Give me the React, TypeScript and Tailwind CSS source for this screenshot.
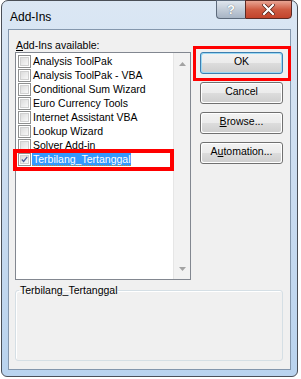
import React from 'react';

const items = [
  'Analysis ToolPak',
  'Analysis ToolPak - VBA',
  'Conditional Sum Wizard',
  'Euro Currency Tools',
  'Internet Assistant VBA',
  'Lookup Wizard',
  'Solver Add-in',
  'Terbilang_Tertanggal',
];

function CheckBox({ checked }: { checked: boolean }) {
  return (
    <div className="w-[13px] h-[13px] shrink-0 border border-[#8e8f8f] bg-white p-[1px]">
      <div className="w-full h-full border border-[#d0d0d0] bg-gradient-to-br from-[#dcdcdc] to-[#f8f8f8] flex items-center justify-center">
        {checked ? (
          <svg width="9" height="9" viewBox="0 0 9 9">
            <path d="M1 4.5 L3.4 7 L8 1.2" fill="none" stroke="#4a5f97" strokeWidth="1.6" />
          </svg>
        ) : null}
      </div>
    </div>
  );
}

function Button({ label, u, isDefault }: { label: string; u?: number; isDefault?: boolean }) {
  return (
    <div
      className={
        'w-[83px] h-[22px] rounded-[3px] border p-[1px] ' +
        (isDefault ? 'border-[#3c7fb1] bg-[#9bd8f3]' : 'border-[#707070] bg-white')
      }
    >
      <div className="w-full h-full rounded-[2px] flex flex-col overflow-hidden">
        <div className="flex-1 bg-gradient-to-b from-[#f2f2f2] to-[#ebebeb]" />
        <div className="flex-1 bg-gradient-to-b from-[#dddddd] to-[#cfcfcf]" />
      </div>
      <div className="-mt-[20px] h-[20px] flex items-center justify-center text-black relative">
        {u === undefined ? (
          label
        ) : (
          <span>
            {label.slice(0, u)}
            <span className="underline">{label[u]}</span>
            {label.slice(u + 1)}
          </span>
        )}
      </div>
    </div>
  );
}

export default function App() {
  return (
    <div className="w-[301px] h-[379px] bg-white pl-[1px] pr-[3px] pb-[2px] font-['Liberation_Sans',Arial,sans-serif] text-[10.5px] text-black overflow-hidden">
      <div className="w-full h-full rounded-t-[7px] rounded-b-[6px] border border-[#4a4f57] bg-gradient-to-b from-[#dbe7f4] via-[#cadcf0] to-[#b9d3ee] flex flex-col px-[6px] pb-[6px] relative">
        {/* caption */}
        <div className="h-[28px] flex items-start justify-between">
          <div className="pt-[9px] pl-[2px] text-[12px] leading-[14px] text-black">Add-Ins</div>
          <div className="flex -mt-[1px] mr-[-1px]">
            <div className="w-[29px] h-[19px] rounded-bl-[4px] border border-[#5d6a7b] border-r-0 bg-gradient-to-b from-[#dfe6ee] via-[#c2ccd8] to-[#a7b4c4] flex items-center justify-center text-[13px] font-bold text-white [text-shadow:0_0_1px_#3b4a5c]">
              ?
            </div>
            <div className="w-[47px] h-[19px] rounded-br-[4px] border border-[#5b2a24] bg-gradient-to-b from-[#e8a493] via-[#cf5b42] to-[#c2442c] flex items-center justify-center">
              <svg width="13" height="11" viewBox="0 0 13 11">
                <path d="M2 1 L11 10 M11 1 L2 10" stroke="#4b1a12" strokeWidth="3.6" strokeLinecap="square" />
                <path d="M2 1 L11 10 M11 1 L2 10" stroke="#ffffff" strokeWidth="2.2" strokeLinecap="square" />
              </svg>
            </div>
          </div>
        </div>

        {/* client area */}
        <div className="flex-1 border border-[#8497ad] bg-[#f0f0f0] pl-[6px] pr-[7px] pt-[8px] pb-[8px] flex flex-col">
          <div className="h-[14px] leading-[14px] pl-[1px]">
            <span className="underline">A</span>dd-Ins available:
          </div>
          <div className="flex mt-0">
            {/* list box */}
            <div className="w-[176px] h-[228px] border border-[#828790] bg-white flex">
              <div className="flex-1 pt-[1px] pl-[1px]">
                {items.map((it, i) => {
                  const sel = i === items.length - 1;
                  return (
                    <div key={it} className="h-[14px] flex items-center pl-[1px] relative">
                      <CheckBox checked={sel} />
                      <span
                        className={
                          'ml-[1px] px-[1px] h-[14px] leading-[14px] whitespace-nowrap ' +
                          (sel ? 'bg-[#3399ff] text-white border-b border-dotted border-[#c58b3d] leading-[13px]' : '')
                        }
                      >
                        {it}
                      </span>
                      {sel ? (
                        <div className="absolute left-[-4px] right-[-1px] top-[-3px] bottom-[-5px] border-[4px] border-[#ff0000]" />
                      ) : null}
                    </div>
                  );
                })}
              </div>
              {/* scrollbar */}
              <div className="w-[17px] bg-[#f2f2f2] border-l border-[#e6e6e6] flex flex-col justify-between items-center pt-[9px] pb-[8px]">
                <svg width="7" height="4" viewBox="0 0 7 4">
                  <path d="M0 4 L3.5 0 L7 4 Z" fill="#a3a3a3" />
                </svg>
                <svg width="7" height="4" viewBox="0 0 7 4">
                  <path d="M0 0 L3.5 4 L7 0 Z" fill="#a3a3a3" />
                </svg>
              </div>
            </div>
            {/* buttons */}
            <div className="ml-[9px] flex flex-col gap-[8px]">
              <div className="relative">
                <Button label="OK" isDefault />
                <div className="absolute left-[-7px] right-[-8px] top-[-6px] bottom-[-7px] border-[3px] border-[#ff0000]" />
              </div>
              <Button label="Cancel" />
              <Button label="Browse..." u={0} />
              <Button label="Automation..." u={1} />
            </div>
          </div>
          {/* description group */}
          <fieldset className="mt-[4px] flex-1 border border-[#d5dfe5] rounded-[3px] bg-[#f0f0f0] shadow-[inset_1px_1px_0_#ffffff]">
            <legend className="ml-[3px] px-[1px] leading-[13px]">Terbilang_Tertanggal</legend>
          </fieldset>
        </div>
      </div>
    </div>
  );
}
